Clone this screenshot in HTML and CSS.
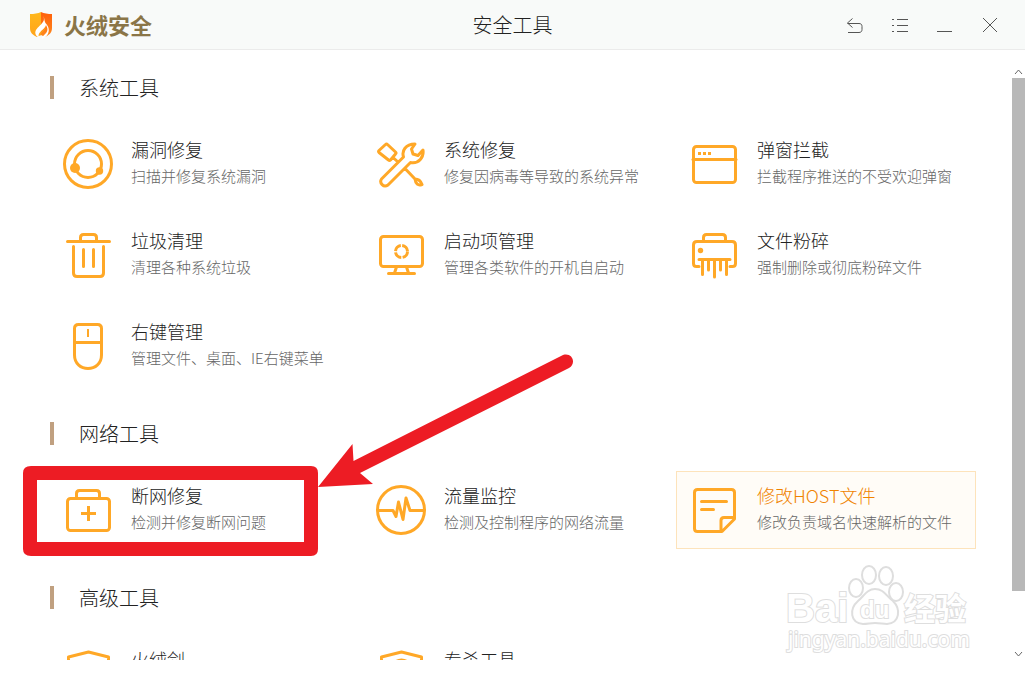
FILE: index.html
```html
<!DOCTYPE html>
<html lang="zh-CN">
<head>
  <meta charset="UTF-8">
  <title>安全工具</title>
  <link rel="stylesheet" href="styles.css">
</head>
<body>
  <header class="topbar">
    <div class="brand">
      <svg class="brand-logo" viewBox="0 0 24 28">
        <defs>
          <linearGradient id="left" x1="0" y1="0" x2="0" y2="1"><stop offset="0" stop-color="#ffb81c"/><stop offset="1" stop-color="#ffa31a"/></linearGradient>
          <linearGradient id="right" x1="0" y1="0" x2="0" y2="1"><stop offset="0" stop-color="#ff5f0a"/><stop offset="1" stop-color="#ff8a1f"/></linearGradient>
        </defs>
        <path fill="url(#left)" d="M12 1C9 2.400 5 3 1 3v14c0 5 3 7 7 9l4-2z"/>
        <path fill="url(#right)" d="M12 1c3 1.400 7 2 11 2v14c0 5-3 7-7 9l-4-2z"/>
        <path fill="#fff" d="M14.500 5c1 4 .5 5-2.500 8.500-3 3-6.500 5.500-5.500 9.500.4 1.500 1.500 2.700 3.500 3.500-1.200-3 .5-5 3-7.200 2-1.800 3.500-3.300 4-5.300 1.800 3 2 5.300.3 7.700-1.800 2.300-4.300 3.300-4.800 6.300 4-1 7-4.500 7.300-8.500.3-4.500-2.800-6-3.800-8.500C15.200 9 15.400 7 14.500 5z"/>
        <path fill="#ffa01c" d="M16.500 15.500c.5 2-.8 3.500-2.500 5-1.500 1.300-2.700 2.500-2.600 4.500-1.200-2 .1-3.700 1.800-5.200 1.500-1.300 2.800-2.500 3.300-4.300z"/>
      </svg>
      <span class="brand-name">火绒安全</span>
    </div>
    <h1>安全工具</h1>
    <div class="window-buttons">
      <button aria-label="返回"><svg viewBox="0 0 16 16"><path d="M5.500 1.500l-5 4.500 5 4.500M.5 6.500H12c2 0 3 1 3 3v3c0 1.800-1 3-3 3H1"/></svg></button>
      <button aria-label="菜单"><svg viewBox="0 0 16 16"><path d="M0 2.500h2M5 2.500h11M0 8.500h2M5 8.500h11M0 14.500h2M5 14.500h11"/></svg></button>
      <button aria-label="最小化"><svg viewBox="0 0 16 16"><path d="M0 14.500h15"/></svg></button>
      <button aria-label="关闭"><svg viewBox="0 0 16 16"><path d="M1 1l14 14M15 1L1 15"/></svg></button>
    </div>
  </header>

  <div class="view">
    <main class="content">
      <section>
        <h2>系统工具</h2>
        <div class="tools">
          <a class="tool" href="#">
            <svg class="icon" viewBox="0 0 50 50"><circle cx="25" cy="25" r="23.500"/><circle cx="25" cy="25" r="13.500"/><circle class="solid" cx="12" cy="29" r="5"/><circle class="solid" cx="36.500" cy="32" r="3.700"/></svg>
            <div><h3>漏洞修复</h3><p>扫描并修复系统漏洞</p></div>
          </a>
          <a class="tool" href="#">
            <svg class="icon" viewBox="0 0 50 50"><path d="M3 11.500l6.500-6q1-1 2 0l8 7.500q1 1 0 2l-5 6q-1 1-2 0L3 13.500q-1-1 0-2zM17 18.500l5 4.500M5.500 40L27.500 18c-2-6 2-13 11.500-13l-3.500 5 1.500 5 5 1.500 5-5.500c1 7-4 14-12.500 12.500L12 46c-4.500 3-9-2-6.500-6zM29 29.500L39 40M39 40q5 0 7 5.500-6 2-7-5.500z"/></svg>
            <div><h3>系统修复</h3><p>修复因病毒等导致的系统异常</p></div>
          </a>
          <a class="tool" href="#">
            <svg class="icon" viewBox="0 0 50 50"><rect x="4.500" y="7.500" width="42" height="36" rx="3"/><path d="M4 20.500h43"/><path class="solid" d="M9 13h3v3H9zM14 13h3v3h-3zM19 13h3v3h-3z"/></svg>
            <div><h3>弹窗拦截</h3><p>拦截程序推送的不受欢迎弹窗</p></div>
          </a>
          <a class="tool" href="#">
            <svg class="icon" viewBox="0 0 50 50"><path d="M4.500 11.500h42M17.500 11V7.500q0-3 3-3h10q3 0 3 3V11M10.500 16.500V43q0 3.500 3.500 3.500h23q3.500 0 3.500-3.500V16.500M20.500 19.500v17M30.500 19.500v17"/></svg>
            <div><h3>垃圾清理</h3><p>清理各种系统垃圾</p></div>
          </a>
          <a class="tool" href="#">
            <svg class="icon" viewBox="0 0 50 50"><rect x="4.500" y="6.500" width="42" height="30" rx="3"/><path d="M20.500 37l-2 6M30.500 37l2 6M12.500 43.500h26"/><circle class="ring" cx="25.500" cy="21.500" r="6"/></svg>
            <div><h3>启动项管理</h3><p>管理各类软件的开机自启动</p></div>
          </a>
          <a class="tool" href="#">
            <svg class="icon" viewBox="0 0 50 50"><path d="M14.500 11V7.500q0-3 3-3h16q3 0 3 3V11M10 36.500H7.500q-3 0-3-3V15q0-3.500 3.500-3.500h35q3.500 0 3.500 3.500v18.500q0 3-3 3H41M10 29.500h31M13.500 30v14.500M19.500 30v10M25.500 30v17M31.500 30v10M37.500 30v14.500"/><circle class="solid" cx="11.500" cy="20.500" r="2.700"/></svg>
            <div><h3>文件粉碎</h3><p>强制删除或彻底粉碎文件</p></div>
          </a>
          <a class="tool" href="#">
            <svg class="icon" viewBox="0 0 50 50"><path d="M15.500 3.500h19q4 0 4 4V34c0 18-27 18-27 0V7.500q0-4 4-4zM11.500 21.500h27"/><path class="thin" d="M25 8v8"/></svg>
            <div><h3>右键管理</h3><p>管理文件、桌面、IE右键菜单</p></div>
          </a>
        </div>
      </section>

      <section>
        <h2>网络工具</h2>
        <div class="tools">
          <a class="tool" href="#">
            <svg class="icon" viewBox="0 0 50 50"><rect x="4.500" y="13.500" width="42" height="32" rx="3"/><path d="M13.500 13V8.500q0-3 3-3h17q3 0 3 3V13"/><path class="flat" d="M25.500 21v15M18 28.500h15"/></svg>
            <div><h3>断网修复</h3><p>检测并修复断网问题</p></div>
          </a>
          <a class="tool" href="#">
            <svg class="icon" viewBox="0 0 50 50"><circle cx="25" cy="25" r="23.500"/><path d="M2 25.500h15l3 6L22.500 17l4.500 17.500L30 13l4 12.500h14"/></svg>
            <div><h3>流量监控</h3><p>检测及控制程序的网络流量</p></div>
          </a>
          <a class="tool active" href="#">
            <svg class="icon" viewBox="0 0 50 50"><path d="M33 46.500H8.500q-3 0-3-3v-36q0-3 3-3h34q3 0 3 3V34zM32 46V35.500q0-3 3-3h10M12.500 16.500h25M12.500 24.500h12"/></svg>
            <div><h3>修改HOST文件</h3><p>修改负责域名快速解析的文件</p></div>
          </a>
        </div>
      </section>

      <section>
        <h2>高级工具</h2>
        <div class="tools">
          <a class="tool" href="#">
            <svg class="icon" viewBox="0 0 50 50"><path d="M5.500 26V8l20-5 20 5v18c0 10-8 17-20 21-12-4-20-11-20-21z"/></svg>
            <div><h3>火绒剑</h3></div>
          </a>
          <a class="tool" href="#">
            <svg class="icon" viewBox="0 0 50 50"><path d="M5.500 26V8l20-5 20 5v18c0 10-8 17-20 21-12-4-20-11-20-21z"/><circle cx="25.500" cy="21" r="10"/></svg>
            <div><h3>专杀工具</h3></div>
          </a>
        </div>
      </section>
    </main>

    <div class="scrollbar">
      <button aria-label="向上滚动"><svg viewBox="0 0 9 6"><path d="M1 5l3.500-4L8 5"/></svg></button>
      <div class="track"><div class="thumb"></div></div>
      <button aria-label="向下滚动"><svg viewBox="0 0 9 6"><path d="M1 1l3.500 4L8 1"/></svg></button>
    </div>
  </div>

  <!-- red frame and arrow -->
  <svg class="marker" viewBox="0 0 556 206">
    <path fill-rule="evenodd" d="M8 116h280q7 0 7 7v76q0 7-7 7H8q-8 0-8-7v-76q0-7 8-7zM14 130v62h267v-62z"/>
    <path d="M295 137l34.500-43 1 17L540 5c9-3 14 8 6 13L337 123l13 11z"/>
  </svg>

  <svg class="watermark" viewBox="0 0 190 100">
    <text class="wm-big" x="3" y="67">Bai</text>
    <path d="M92 34c-8 0-11 7-17 12-9 8-8 22 5 23 5 0 7-1 12-1s8 1 12 1c13-1 14-15 6-23-7-5-9-12-18-12z"/>
    <ellipse cx="73" cy="33" rx="7" ry="9"/>
    <ellipse cx="86" cy="20" rx="7" ry="9"/>
    <ellipse cx="103" cy="21" rx="7" ry="9"/>
    <ellipse cx="113" cy="37" rx="7" ry="9"/>
    <text class="wm-du" x="77" y="63">du</text>
    <text class="wm-cn" x="121" y="65">经验</text>
    <text class="wm-url" x="5" y="92">jingyan.baidu.com</text>
  </svg>
</body>
</html>
```
FILE: styles.css
```css
* {
  box-sizing: border-box;
}
body {
  margin: 0;
  height: 100vh;
  display: flex;
  flex-direction: column;
  position: relative;
  overflow: hidden;
  padding-bottom: 15px;
  background: #fff;
  color: #222;
  font-family: "Noto Sans CJK SC", sans-serif;
  font-weight: 300;
}
h1, h2, h3, p {
  margin: 0;
  font-weight: 300;
}
button {
  border: none;
  background: none;
  padding: 0;
  cursor: pointer;
}

/* title bar */
.topbar {
  flex: none;
  height: 50px;
  display: grid;
  grid-template-columns: 1fr auto 1fr;
  align-items: center;
  background: #f8faf9;
  border-bottom: 1px solid #ebebeb;
}
.topbar h1 {
  font-size: 20px;
  line-height: 28px;
}
.brand {
  display: flex;
  align-items: center;
  gap: 11px;
  padding-left: 29px;
}
.brand-logo {
  width: 24px;
  height: 28px;
}
.brand-name {
  padding-bottom: 3px;
  color: #8a7547;
  font-size: 22px;
  line-height: 28px;
  font-weight: 700;
}
.window-buttons {
  display: flex;
  justify-content: flex-end;
  padding-right: 13px;
}
.window-buttons button {
  width: 45px;
  height: 50px;
  display: flex;
  align-items: center;
  justify-content: center;
}
.window-buttons svg {
  width: 16px;
  height: 16px;
  fill: none;
  stroke: #555;
}

/* tool list */
.view {
  flex: 1;
  min-height: 0;
  display: flex;
}
.content {
  flex: 1;
  overflow: hidden;
  padding: 26px 36px 0 50px;
}
section {
  margin-bottom: 37px;
}
h2 {
  border-left: 4px solid #c0a080;
  padding-left: 25px;
  margin-bottom: 26px;
  font-size: 20px;
  line-height: 23px;
}
.tools {
  display: grid;
  grid-template-columns: repeat(3, 1fr);
  gap: 13px;
}
.tool {
  height: 78px;
  display: flex;
  gap: 18px;
  padding: 11px 12px;
  border: 1px solid transparent;
  color: inherit;
  text-decoration: none;
  white-space: nowrap;
}
.tool h3 {
  font-size: 18px;
  line-height: 24px;
}
.tool p {
  color: #666;
  font-size: 15px;
  line-height: 30px;
}
.tool.active {
  background: #fffcf7;
  border-color: #fde3bb;
}
.tool.active h3 {
  color: #f08300;
}
.icon {
  flex: none;
  width: 50px;
  height: 50px;
  margin-top: 2px;
  fill: none;
  stroke: #ffa827;
  stroke-width: 3;
  stroke-linecap: round;
  stroke-linejoin: round;
}
.icon .solid {
  fill: #ffa827;
  stroke: none;
}
.icon .flat {
  stroke-linecap: butt;
}
.icon .thin {
  stroke-width: 2;
  stroke-linecap: butt;
}
.icon .ring {
  stroke-linecap: butt;
  stroke-dasharray: 8 1.420;
}

/* scrollbar */
.scrollbar {
  width: 13px;
  display: flex;
  flex-direction: column;
  padding-top: 16px;
}
.scrollbar button {
  height: 12px;
  display: flex;
  align-items: center;
  justify-content: center;
}
.scrollbar svg {
  width: 9px;
  height: 6px;
  fill: none;
  stroke: #666;
}
.track {
  flex: 1;
}
.thumb {
  height: 90%;
  background: #b8b8b8;
}

/* drawn over the page */
.marker {
  position: absolute;
  left: 23px;
  top: 350px;
  width: 556px;
  height: 206px;
  fill: #ed1c24;
  pointer-events: none;
}
.watermark {
  position: absolute;
  left: 783px;
  top: 555px;
  width: 190px;
  height: 100px;
  overflow: visible;
  fill: #fff;
  stroke: #dedede;
  stroke-width: 2;
  pointer-events: none;
}
.watermark text {
  font-family: "Liberation Sans", "Noto Sans CJK SC", sans-serif;
  font-weight: 700;
  paint-order: stroke;
}
.watermark .wm-big {
  font-size: 40px;
}
.watermark .wm-du {
  font-size: 24px;
}
.watermark .wm-cn {
  font-size: 31px;
}
.watermark .wm-url {
  font-family: "Noto Sans", sans-serif;
  font-size: 21px;
  font-weight: 400;
}
```
